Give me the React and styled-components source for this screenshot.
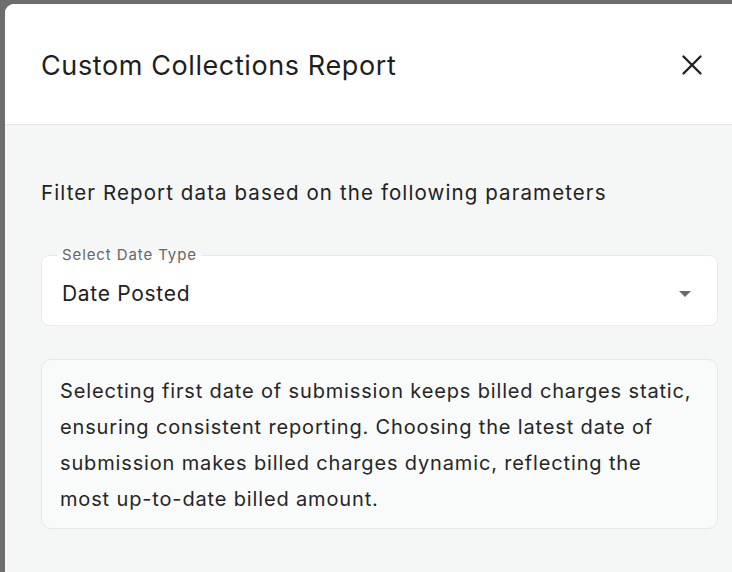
import React from "react";
import styled, { createGlobalStyle } from "styled-components";

const GlobalStyle = createGlobalStyle`
  html, body {
    margin: 0;
    padding: 0;
    background: #6e6e6e;
    overflow: hidden;
  }
  body {
    font-family: Inter, "Liberation Sans", sans-serif;
    color: #222;
  }
`;

const Page = styled.div`
  height: 572px;
  padding: 4px 0 0 5px;
  box-sizing: border-box;
  overflow: hidden;
`;

const Modal = styled.div`
  width: 760px;
  height: 600px;
  background: #f5f6f6;
  border-radius: 9px 0 0 0;
  overflow: hidden;
`;

const Header = styled.header`
  height: 121px;
  background: #fff;
  border-bottom: 1px solid #e6e7e7;
  display: flex;
  align-items: center;
  padding: 3px 0 0 36px;
  box-sizing: border-box;
`;

const Title = styled.h1`
  margin: 0;
  flex: 1;
  font-size: 27px;
  font-weight: 400;
  letter-spacing: 0.6px;
  color: #1e1e1e;
`;

const CloseButton = styled.button`
  border: 0;
  background: none;
  padding: 0;
  margin: -2px 61px 0 0;
  width: 24px;
  height: 24px;
  display: flex;
  align-items: center;
  justify-content: center;
  cursor: pointer;
`;

const Body = styled.div`
  padding: 55px 0 0 36px;
  width: 677px;
`;

const Intro = styled.p`
  margin: 0 0 49px;
  font-size: 20.5px;
  letter-spacing: 1.1px;
  line-height: 26px;
  color: #222;
`;

const Field = styled.div`
  margin: 0 0 33px;
  padding: 6px 26px 0 20px;
  height: 71px;
  box-sizing: border-box;
  border: 1px solid #e8e9e9;
  border-radius: 8px;
  background: #fff;
  display: flex;
  align-items: center;
  position: relative;
`;

const Label = styled.span`
  position: absolute;
  top: -9px;
  left: 16px;
  padding: 0 4px;
  background: linear-gradient(to bottom, #f5f6f6 50%, #fff 50%);
  font-size: 15px;
  letter-spacing: 0.9px;
  line-height: 16px;
  color: #666;
`;

const Value = styled.span`
  flex: 1;
  font-size: 21px;
  letter-spacing: 0.7px;
  color: #222;
`;

const Caret = styled.span`
  width: 0;
  height: 0;
  border-left: 6px solid transparent;
  border-right: 6px solid transparent;
  border-top: 6px solid #6a6a6a;
`;

const Note = styled.div`
  background: #f9fafa;
  border: 1px solid #e6e7e7;
  border-radius: 10px;
  padding: 13px 18px 11px;
  font-size: 20px;
  letter-spacing: 0.85px;
  line-height: 36px;
  color: #262626;
`;

export default function App() {
  return (
    <Page>
      <GlobalStyle />
      <Modal>
        <Header>
          <Title>Custom Collections Report</Title>
          <CloseButton aria-label="Close">
            <svg width="22" height="22" viewBox="0 0 22 22">
              <path d="M2.5 2.5 L19.5 19.5 M19.5 2.5 L2.5 19.5" stroke="#222" strokeWidth="2.4" strokeLinecap="round" />
            </svg>
          </CloseButton>
        </Header>
        <Body>
          <Intro>Filter Report data based on the following parameters</Intro>
          <Field>
            <Label>Select Date Type</Label>
            <Value>Date Posted</Value>
            <Caret />
          </Field>
          <Note>
            Selecting first date of submission keeps billed charges static,
            <br />
            ensuring consistent reporting. Choosing the latest date of
            <br />
            submission makes billed charges dynamic, reflecting the
            <br />
            most up-to-date billed amount.
          </Note>
        </Body>
      </Modal>
    </Page>
  );
}
